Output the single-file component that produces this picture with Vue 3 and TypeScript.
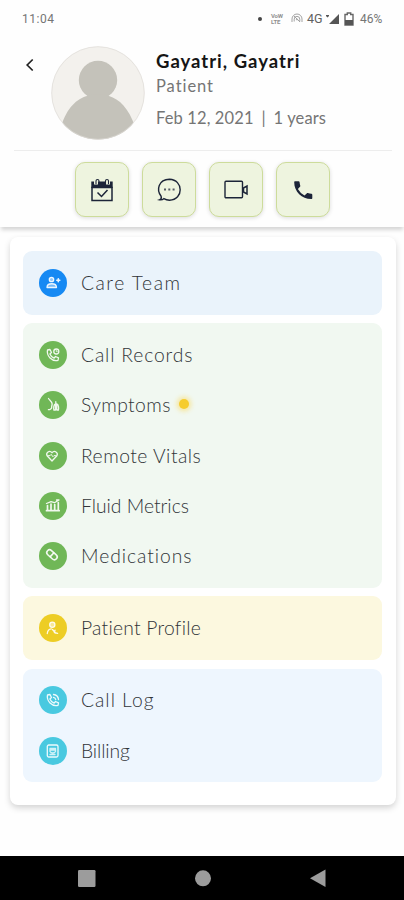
<script setup lang="ts">
interface Row {
  label: string
  icon: string
  tracking: number
  alert?: boolean
}
interface Section {
  tone: string
  rows: Row[]
}

const actions: string[] = ['calendar', 'chat', 'video', 'phone']

const sections: Section[] = [
  { tone: 'blue', rows: [{ label: 'Care Team', icon: 'team', tracking: 1.5 }] },
  {
    tone: 'green',
    rows: [
      { label: 'Call Records', icon: 'records', tracking: 0.85 },
      { label: 'Symptoms', icon: 'symptoms', tracking: 0.4, alert: true },
      { label: 'Remote Vitals', icon: 'vitals', tracking: 0.5 },
      { label: 'Fluid Metrics', icon: 'metrics', tracking: 0 },
      { label: 'Medications', icon: 'pill', tracking: 0.95 },
    ],
  },
  { tone: 'yellow', rows: [{ label: 'Patient Profile', icon: 'profile', tracking: 0.25 }] },
  {
    tone: 'cyan',
    rows: [
      { label: 'Call Log', icon: 'log', tracking: 1.0 },
      { label: 'Billing', icon: 'billing', tracking: -0.1 },
    ],
  },
]
</script>

<template>
  <div class="screen">
    <div class="status">
      <span class="clock">11:04</span>
      <span class="dot"></span>
      <span class="lte"><b>VoW</b><b>LTE</b></span>
      <svg class="hotspot" width="12" height="11" viewBox="0 0 12 11" fill="none" stroke="#a3a3a3">
        <path d="M1 9V6a5 5 0 0 1 10 0v3M3.2 8.5V6.2a2.8 2.8 0 0 1 5.6 0v2.3M3 3l6 6" />
        <circle cx="6" cy="6.5" r=".6" />
      </svg>
      <span class="network">4G</span>
      <svg class="signal" width="13" height="10" viewBox="0 0 13 10" fill="#555">
        <path d="M13 0v10H3zM0 1h3v1L1.500 3.500 0 2z" />
      </svg>
      <svg class="battery" width="10" height="14" viewBox="0 0 10 14">
        <path d="M3.300 1h3.400v1.500H9V13H1V2.500h2.300z" fill="#fff" stroke="#666" stroke-width="1.400" />
        <path d="M1 8h8v5H1z" fill="#555" />
      </svg>
      <span class="percent">46%</span>
    </div>

    <header class="header">
      <div class="person">
        <svg class="back" width="9" height="14" viewBox="0 0 9 14">
          <path d="M7.700 1.500 2.200 7l5.500 5.500" fill="none" stroke="#222" stroke-width="1.700" />
        </svg>
        <svg class="avatar" width="94" height="94" viewBox="0 0 94 94">
          <defs><clipPath id="face"><circle cx="47" cy="47" r="46.500" /></clipPath></defs>
          <circle cx="47" cy="47" r="46.500" fill="#f3f1ed" />
          <g clip-path="url(#face)" fill="#c4c2ba">
            <circle cx="47" cy="34" r="19.200" />
            <path d="M10 81C16 61 26 53 36 50q11-4 22 0c10 3 20 12 26 31v14H10z" />
          </g>
          <circle cx="47" cy="47" r="46.300" fill="none" stroke="#dedbd7" stroke-width=".7" />
        </svg>
        <div class="details">
          <div class="name">Gayatri, Gayatri</div>
          <div class="role">Patient</div>
          <div class="born">Feb 12, 2021 <span class="bar">|</span> 1 years</div>
        </div>
      </div>
      <div class="actions">
        <button v-for="action in actions" :key="action" class="action" :aria-label="action">
          <svg width="28" height="28" viewBox="0 0 28 28" fill="none" stroke="#1c2438" stroke-width="1.500">
            <template v-if="action === 'calendar'">
              <path d="M4 11.500h20V24.500H4z" />
              <path d="M3.300 5.500H6v3h4v-3h8v3h4v-3h2.700V12H3.300z" fill="#1c2438" stroke="none" />
              <path d="M8 8V5a1.500 1.500 0 0 1 3 0v3M17.500 8V5a1.500 1.500 0 0 1 3 0v3" stroke-width="1.100" />
              <path d="m9.500 16.500 4 4 6-6.500" />
            </template>
            <template v-else-if="action === 'chat'">
              <path d="M4.500 23.800c1.500-.6 2.200-2 1.600-3.600C1.200 14 3.300 3.500 14.500 3.200c14 .5 14.500 20.500 0 21-2.500 0-4.300-.7-5.700-1.500-1.100 1-2.600 1.400-4.300 1.100z" stroke-width="1.400" />
              <path d="M9 13.500h2M13.300 13.500h2M17.600 13.500h2" stroke="#555b66" stroke-width="2" />
            </template>
            <template v-else-if="action === 'video'">
              <rect x="3" y="5.300" width="17.500" height="16.500" rx="1" stroke-width="1.400" />
              <path d="m21.500 12 3.500-2v8l-3.500-2z" />
            </template>
            <path
              v-else
              d="M5.200 6.200c0-.7.4-1 1-1h3.400c.6 0 .9.4 1 1 .1 1.200.3 2.400.7 3.500.1.4 0 .8-.3 1.100L8.900 13a16 16 0 0 0 6.600 6.500l2.200-2.100c.3-.3.7-.4 1.100-.3 1.200.4 2.400.6 3.600.6.5.1.9.5.9 1v3.400c0 .6-.4 1-1 1C12.800 23.100 5.200 15.600 5.200 6.200z"
              fill="#1c2438"
              stroke="none"
            />
          </svg>
        </button>
      </div>
    </header>

    <main class="card">
      <section v-for="section in sections" :key="section.tone" class="section" :class="section.tone">
        <div v-for="row in section.rows" :key="row.label" class="row">
          <span class="badge">
            <svg width="28" height="28" viewBox="0 0 28 28" fill="none" stroke="#fff" stroke-opacity=".9" stroke-width="1.300" stroke-linecap="round" stroke-linejoin="round">
              <template v-if="row.icon === 'team'">
                <circle cx="12.500" cy="10.500" r="2.200" fill="#ffffff88" />
                <path d="M8 18.500c0-5 9.500-5 9.500 0z" fill="#ffffff66" />
                <path d="M19.300 9.700v3M17.800 11.200h3" stroke-width="1.600" />
              </template>
              <template v-else-if="row.icon === 'records' || row.icon === 'log'">
                <path d="M8.500 9 11 8.500l1.500 3-1.600 1.400c.8 2 2.200 3.400 4.200 4.200l1.400-1.600 3 1.400-.5 2.400c-6 1.400-11.700-4.300-10.500-10.300z" />
                <path v-if="row.icon === 'log'" d="M14.500 8.500c3 .3 4.700 2 5 5M14.500 11.300c1.200.2 2 1 2.200 2.200" />
                <template v-else>
                  <circle cx="17.300" cy="10.500" r="2.500" />
                  <path d="M17.300 9.300v1.300h1" stroke-width=".8" />
                </template>
              </template>
              <template v-else-if="row.icon === 'symptoms'">
                <path d="M9.500 7.500c1 1.700 3.300 2.700 3.600 5.200.2 1.600-.6 2-.4 3.500.1 1.300-1.600 2.500-3.300 2.500" />
                <path d="M16.800 12.500v-1.800M16.500 13c-2 .5-2 4.300-1.600 6h1.600zM17.800 13c2 .5 2 4.300 1.600 6h-1.600z" />
              </template>
              <template v-else-if="row.icon === 'vitals'">
                <path d="M13 19 8.100 13.800C6.500 10.500 10.500 7.800 13 10.700c2.500-2.900 6.500-.2 4.900 3.100z" />
                <path d="M9 13.700h2l1.200-1.300 1.700 2.300 1-1h2" stroke-width="1" />
              </template>
              <template v-else-if="row.icon === 'metrics'">
                <path d="M8.500 13.500v5M12 12v6.500M15.700 12.500v6M19.300 10.500v8M7.500 18.700h12.700" stroke-width="1.700" />
                <path d="m7.500 11.500 4.500-1.800 3.500 1 4-2.500M17.500 8h2.500" />
              </template>
              <g v-else-if="row.icon === 'pill'" transform="rotate(42 13 12.800)">
                <rect x="7" y="10" width="12" height="5.600" rx="2.800" stroke-width="1.600" />
                <path d="M13 10.300v5" stroke-width="1.600" />
              </g>
              <template v-else-if="row.icon === 'profile'">
                <circle cx="13.300" cy="10.700" r="2.600" fill="#ffffff88" />
                <path d="M8.300 19.500c.2-3 1.800-4.500 4-4.700M13.500 15.500l3 3.500M16 16.200l-.7 2.300 3.300.8" />
              </template>
              <template v-else>
                <rect x="8.300" y="8" width="10.700" height="12" rx="1.500" />
                <path d="M11 11.500h5.500v3c-1 2-4.500 2-5.500 0zM11 17.500h5M12 13h3.500" stroke-opacity=".75" />
              </template>
            </svg>
          </span>
          <span class="label" :style="{ letterSpacing: row.tracking + 'px' }">{{ row.label }}</span>
          <span v-if="row.alert" class="alert"></span>
        </div>
      </section>
    </main>

    <nav class="nav">
      <svg width="404" height="44" viewBox="0 0 404 44" fill="#9c9c9c">
        <rect x="78" y="14" width="17.500" height="17" rx="1.200" />
        <circle cx="203" cy="22.300" r="8" />
        <path d="M325.500 13.500v17.500L310 22.300z" />
      </svg>
    </nav>
  </div>
</template>

<style>
body {
  margin: 0;
  background: #fff;
}
</style>

<style scoped>
.screen {
  width: 404px;
  height: 900px;
  display: flex;
  flex-direction: column;
  overflow: hidden;
  background: #fefefe;
  font-family: Lato, 'Liberation Sans', sans-serif;
}
.status {
  height: 36px;
  flex: none;
  box-sizing: border-box;
  padding: 1px 20px 0 22px;
  display: flex;
  align-items: center;
  font-family: Roboto, sans-serif;
  font-size: 12px;
  color: #757575;
}
.clock {
  flex: 1;
  letter-spacing: 0.5px;
}
.dot {
  width: 4px;
  height: 4px;
  border-radius: 50%;
  background: #444;
  margin-right: 9px;
}
.lte {
  width: 13px;
  display: flex;
  flex-direction: column;
  font-size: 6px;
  line-height: 6px;
  letter-spacing: -0.2px;
  color: #909090;
}
.hotspot {
  margin-left: 7px;
}
.network {
  width: 16px;
  margin: 0 3px 0 4px;
  font-size: 12.5px;
  color: #606060;
}
.battery {
  margin: 0 6px 0 5px;
}
.percent {
  width: 24px;
}
.header {
  height: 191px;
  flex: none;
  box-shadow: 0 4px 4px -1px rgba(0, 0, 0, 0.16);
  background: #fefefe;
}
.person {
  height: 114px;
  margin: 0 12px 0 14px;
  border-bottom: 1px solid #ededed;
  display: flex;
  align-items: flex-start;
}
.back {
  margin: 22px 16px 0 11px;
}
.avatar {
  margin: 9.5px 0 0 0.5px;
}
.details {
  margin-left: 11.5px;
  white-space: nowrap;
  color: #757575;
}
.name {
  margin-top: 13px;
  font-size: 18.5px;
  line-height: 24px;
  font-weight: 700;
  letter-spacing: 1px;
  color: #151515;
}
.role {
  margin-top: 1px;
  font-size: 16.5px;
  line-height: 24px;
  letter-spacing: 0.95px;
}
.born {
  margin-top: 7.5px;
  font-size: 16.5px;
  line-height: 24px;
  letter-spacing: 0.12px;
}
.bar {
  margin: 0 3.5px;
}
.actions {
  display: flex;
  justify-content: center;
  gap: 13px;
  padding: 11px 0 0;
}
.action {
  width: 54px;
  height: 55px;
  padding: 0;
  display: flex;
  align-items: center;
  justify-content: center;
  background: #eef4df;
  border: 1.5px solid #cddc9b;
  border-radius: 10px;
  box-shadow: 0 1px 4px rgba(0, 0, 0, 0.14);
}
.card {
  width: 386px;
  height: 568px;
  flex: none;
  box-sizing: border-box;
  margin: 10px 0 0 10px;
  padding: 14px 14px 0 13px;
  display: flex;
  flex-direction: column;
  gap: 8.5px;
  background: #fff;
  border-radius: 8px;
  box-shadow: 0 3px 6px rgba(0, 0, 0, 0.17);
}
.section {
  padding: 6.9px 0 6.9px 16px;
  border-radius: 9px;
}
.row {
  height: 50.1px;
  display: flex;
  align-items: center;
}
.badge {
  width: 28px;
  height: 28px;
  border-radius: 50%;
  flex: none;
}
.badge svg {
  display: block;
}
.blue {
  background: #eaf3fb;
}
.green {
  background: #f1f8f1;
}
.yellow {
  background: #fcf8df;
}
.cyan {
  background: #eef6fe;
}
.blue .badge {
  background: #1689f3;
}
.green .badge {
  background: #70b757;
}
.yellow .badge {
  background: #edcd25;
}
.cyan .badge {
  background: #49c9e0;
}
.label {
  margin-left: 14px;
  font-size: 19.3px;
  line-height: 24px;
  font-weight: 300;
  color: #303438;
  white-space: nowrap;
}
.alert {
  width: 10px;
  height: 10px;
  margin: 0 0 2px 8px;
  border-radius: 50%;
  background: #f6cc2d;
  box-shadow: 0 0 4px 2.5px #f8df80aa;
}
.nav {
  height: 44px;
  flex: none;
  margin-top: auto;
  background: #000;
}
.nav svg {
  display: block;
}
</style>
